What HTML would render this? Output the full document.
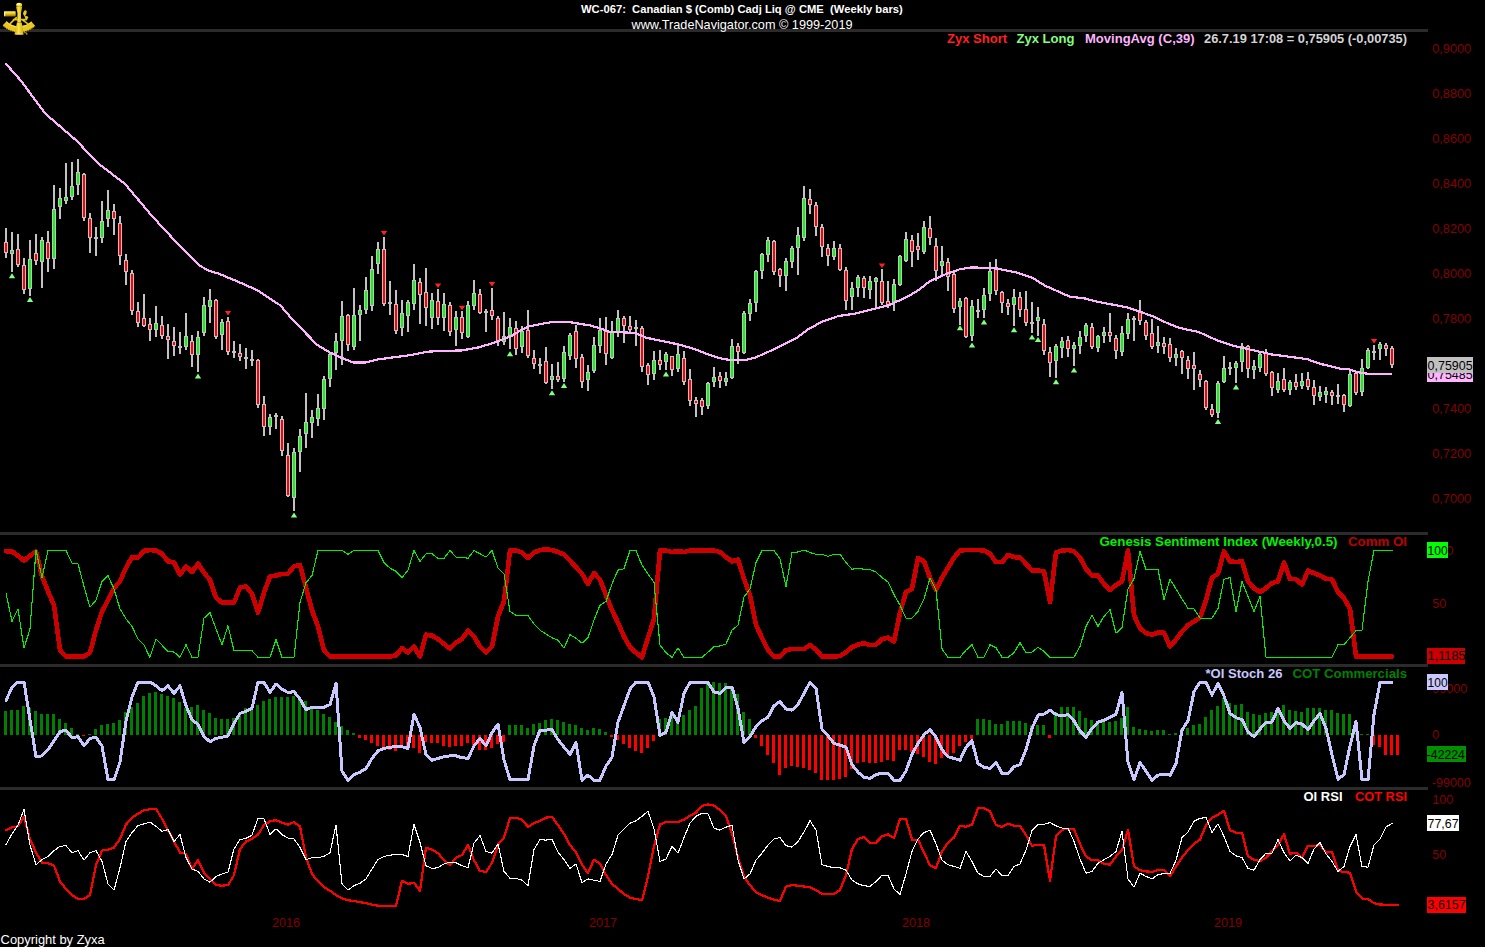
<!DOCTYPE html><html><head><meta charset="utf-8"><title>WC-067 Canadian $ Weekly</title><style>
html,body{margin:0;padding:0;background:#000}body{width:1485px;height:947px;overflow:hidden;position:relative}
svg{position:absolute;left:0;top:0;display:block}text{font-family:"Liberation Sans",Arial,sans-serif}
.b{font-weight:bold}.ax{fill:#800000;font-size:13px}
</style></head><body>
<svg width="1485" height="947" viewBox="0 0 1485 947">
<rect width="1485" height="947" fill="#000"/>
<g fill="#2b2b2b" shape-rendering="crispEdges">
<rect x="0" y="29" width="1428" height="3"/>
<rect x="0" y="532" width="1428" height="3"/>
<rect x="0" y="664" width="1428" height="3"/>
<rect x="0" y="787" width="1428" height="3"/>
</g>
<g shape-rendering="crispEdges">
<rect x="4" y="711" width="3" height="24" fill="#008000"/>
<rect x="10" y="710" width="3" height="25" fill="#008000"/>
<rect x="16" y="710" width="3" height="25" fill="#008000"/>
<rect x="22" y="706" width="3" height="29" fill="#008000"/>
<rect x="28" y="708" width="3" height="27" fill="#008000"/>
<rect x="34" y="711" width="3" height="24" fill="#008000"/>
<rect x="40" y="714" width="3" height="21" fill="#008000"/>
<rect x="46" y="714" width="3" height="21" fill="#008000"/>
<rect x="52" y="714" width="3" height="21" fill="#008000"/>
<rect x="58" y="719" width="3" height="16" fill="#008000"/>
<rect x="64" y="723" width="3" height="12" fill="#008000"/>
<rect x="70" y="728" width="3" height="7" fill="#008000"/>
<rect x="76" y="734" width="3" height="1" fill="#008000"/>
<rect x="82" y="735" width="3" height="1" fill="#f00"/>
<rect x="88" y="734" width="3" height="1" fill="#008000"/>
<rect x="94" y="729" width="3" height="6" fill="#008000"/>
<rect x="100" y="725" width="3" height="10" fill="#008000"/>
<rect x="106" y="724" width="3" height="11" fill="#008000"/>
<rect x="112" y="723" width="3" height="12" fill="#008000"/>
<rect x="118" y="720" width="3" height="15" fill="#008000"/>
<rect x="124" y="712" width="3" height="23" fill="#008000"/>
<rect x="130" y="707" width="3" height="28" fill="#008000"/>
<rect x="136" y="703" width="3" height="32" fill="#008000"/>
<rect x="142" y="696" width="3" height="39" fill="#008000"/>
<rect x="148" y="693" width="3" height="42" fill="#008000"/>
<rect x="154" y="692" width="3" height="43" fill="#008000"/>
<rect x="160" y="694" width="3" height="41" fill="#008000"/>
<rect x="166" y="696" width="3" height="39" fill="#008000"/>
<rect x="172" y="698" width="3" height="37" fill="#008000"/>
<rect x="178" y="702" width="3" height="33" fill="#008000"/>
<rect x="184" y="708" width="3" height="27" fill="#008000"/>
<rect x="190" y="707" width="3" height="28" fill="#008000"/>
<rect x="196" y="705" width="3" height="30" fill="#008000"/>
<rect x="202" y="710" width="3" height="25" fill="#008000"/>
<rect x="208" y="713" width="3" height="22" fill="#008000"/>
<rect x="214" y="718" width="3" height="17" fill="#008000"/>
<rect x="220" y="719" width="3" height="16" fill="#008000"/>
<rect x="226" y="719" width="3" height="16" fill="#008000"/>
<rect x="232" y="718" width="3" height="17" fill="#008000"/>
<rect x="238" y="713" width="3" height="22" fill="#008000"/>
<rect x="244" y="708" width="3" height="27" fill="#008000"/>
<rect x="250" y="708" width="3" height="27" fill="#008000"/>
<rect x="256" y="705" width="3" height="30" fill="#008000"/>
<rect x="262" y="701" width="3" height="34" fill="#008000"/>
<rect x="268" y="699" width="3" height="36" fill="#008000"/>
<rect x="274" y="697" width="3" height="38" fill="#008000"/>
<rect x="280" y="697" width="3" height="38" fill="#008000"/>
<rect x="286" y="697" width="3" height="38" fill="#008000"/>
<rect x="292" y="696" width="3" height="39" fill="#008000"/>
<rect x="298" y="697" width="3" height="38" fill="#008000"/>
<rect x="304" y="701" width="3" height="34" fill="#008000"/>
<rect x="310" y="708" width="3" height="27" fill="#008000"/>
<rect x="316" y="710" width="3" height="25" fill="#008000"/>
<rect x="322" y="714" width="3" height="21" fill="#008000"/>
<rect x="328" y="717" width="3" height="18" fill="#008000"/>
<rect x="334" y="722" width="3" height="13" fill="#008000"/>
<rect x="340" y="726" width="3" height="9" fill="#008000"/>
<rect x="346" y="730" width="3" height="5" fill="#008000"/>
<rect x="352" y="733" width="3" height="2" fill="#008000"/>
<rect x="358" y="735" width="3" height="3" fill="#f00"/>
<rect x="364" y="735" width="3" height="5" fill="#f00"/>
<rect x="370" y="735" width="3" height="8" fill="#f00"/>
<rect x="376" y="735" width="3" height="11" fill="#f00"/>
<rect x="382" y="735" width="3" height="12" fill="#f00"/>
<rect x="388" y="735" width="3" height="15" fill="#f00"/>
<rect x="394" y="735" width="3" height="16" fill="#f00"/>
<rect x="400" y="735" width="3" height="12" fill="#f00"/>
<rect x="406" y="735" width="3" height="13" fill="#f00"/>
<rect x="412" y="735" width="3" height="13" fill="#f00"/>
<rect x="418" y="735" width="3" height="18" fill="#f00"/>
<rect x="424" y="735" width="3" height="7" fill="#f00"/>
<rect x="430" y="735" width="3" height="8" fill="#f00"/>
<rect x="436" y="735" width="3" height="8" fill="#f00"/>
<rect x="442" y="735" width="3" height="11" fill="#f00"/>
<rect x="448" y="735" width="3" height="12" fill="#f00"/>
<rect x="454" y="735" width="3" height="11" fill="#f00"/>
<rect x="460" y="735" width="3" height="11" fill="#f00"/>
<rect x="466" y="735" width="3" height="8" fill="#f00"/>
<rect x="472" y="735" width="3" height="12" fill="#f00"/>
<rect x="478" y="735" width="3" height="15" fill="#f00"/>
<rect x="484" y="735" width="3" height="15" fill="#f00"/>
<rect x="490" y="735" width="3" height="13" fill="#f00"/>
<rect x="496" y="735" width="3" height="9" fill="#f00"/>
<rect x="502" y="735" width="3" height="7" fill="#f00"/>
<rect x="508" y="725" width="3" height="10" fill="#008000"/>
<rect x="514" y="725" width="3" height="10" fill="#008000"/>
<rect x="520" y="725" width="3" height="10" fill="#008000"/>
<rect x="526" y="728" width="3" height="7" fill="#008000"/>
<rect x="532" y="724" width="3" height="11" fill="#008000"/>
<rect x="538" y="723" width="3" height="12" fill="#008000"/>
<rect x="544" y="720" width="3" height="15" fill="#008000"/>
<rect x="550" y="719" width="3" height="16" fill="#008000"/>
<rect x="556" y="720" width="3" height="15" fill="#008000"/>
<rect x="562" y="722" width="3" height="13" fill="#008000"/>
<rect x="568" y="724" width="3" height="11" fill="#008000"/>
<rect x="574" y="725" width="3" height="10" fill="#008000"/>
<rect x="580" y="728" width="3" height="7" fill="#008000"/>
<rect x="586" y="730" width="3" height="5" fill="#008000"/>
<rect x="592" y="728" width="3" height="7" fill="#008000"/>
<rect x="598" y="729" width="3" height="6" fill="#008000"/>
<rect x="604" y="732" width="3" height="3" fill="#008000"/>
<rect x="610" y="735" width="3" height="2" fill="#f00"/>
<rect x="616" y="735" width="3" height="5" fill="#f00"/>
<rect x="622" y="735" width="3" height="9" fill="#f00"/>
<rect x="628" y="735" width="3" height="13" fill="#f00"/>
<rect x="634" y="735" width="3" height="16" fill="#f00"/>
<rect x="640" y="735" width="3" height="18" fill="#f00"/>
<rect x="646" y="735" width="3" height="13" fill="#f00"/>
<rect x="652" y="735" width="3" height="6" fill="#f00"/>
<rect x="658" y="719" width="3" height="16" fill="#008000"/>
<rect x="664" y="718" width="3" height="17" fill="#008000"/>
<rect x="670" y="716" width="3" height="19" fill="#008000"/>
<rect x="676" y="718" width="3" height="17" fill="#008000"/>
<rect x="682" y="715" width="3" height="20" fill="#008000"/>
<rect x="688" y="710" width="3" height="25" fill="#008000"/>
<rect x="694" y="706" width="3" height="29" fill="#008000"/>
<rect x="700" y="688" width="3" height="47" fill="#008000"/>
<rect x="706" y="684" width="3" height="51" fill="#008000"/>
<rect x="712" y="682" width="3" height="53" fill="#008000"/>
<rect x="718" y="683" width="3" height="52" fill="#008000"/>
<rect x="724" y="683" width="3" height="52" fill="#008000"/>
<rect x="730" y="686" width="3" height="49" fill="#008000"/>
<rect x="736" y="694" width="3" height="41" fill="#008000"/>
<rect x="742" y="712" width="3" height="23" fill="#008000"/>
<rect x="748" y="719" width="3" height="16" fill="#008000"/>
<rect x="754" y="735" width="3" height="3" fill="#f00"/>
<rect x="760" y="735" width="3" height="11" fill="#f00"/>
<rect x="766" y="735" width="3" height="20" fill="#f00"/>
<rect x="772" y="735" width="3" height="28" fill="#f00"/>
<rect x="778" y="735" width="3" height="40" fill="#f00"/>
<rect x="784" y="735" width="3" height="33" fill="#f00"/>
<rect x="790" y="735" width="3" height="31" fill="#f00"/>
<rect x="796" y="735" width="3" height="32" fill="#f00"/>
<rect x="802" y="735" width="3" height="33" fill="#f00"/>
<rect x="808" y="735" width="3" height="35" fill="#f00"/>
<rect x="814" y="735" width="3" height="38" fill="#f00"/>
<rect x="820" y="735" width="3" height="45" fill="#f00"/>
<rect x="826" y="735" width="3" height="45" fill="#f00"/>
<rect x="832" y="735" width="3" height="45" fill="#f00"/>
<rect x="838" y="735" width="3" height="44" fill="#f00"/>
<rect x="844" y="735" width="3" height="42" fill="#f00"/>
<rect x="850" y="735" width="3" height="34" fill="#f00"/>
<rect x="856" y="735" width="3" height="28" fill="#f00"/>
<rect x="862" y="735" width="3" height="27" fill="#f00"/>
<rect x="868" y="735" width="3" height="28" fill="#f00"/>
<rect x="874" y="735" width="3" height="28" fill="#f00"/>
<rect x="880" y="735" width="3" height="27" fill="#f00"/>
<rect x="886" y="735" width="3" height="25" fill="#f00"/>
<rect x="892" y="735" width="3" height="26" fill="#f00"/>
<rect x="898" y="735" width="3" height="15" fill="#f00"/>
<rect x="904" y="735" width="3" height="15" fill="#f00"/>
<rect x="910" y="735" width="3" height="17" fill="#f00"/>
<rect x="916" y="735" width="3" height="19" fill="#f00"/>
<rect x="922" y="735" width="3" height="22" fill="#f00"/>
<rect x="928" y="735" width="3" height="27" fill="#f00"/>
<rect x="934" y="735" width="3" height="29" fill="#f00"/>
<rect x="940" y="735" width="3" height="23" fill="#f00"/>
<rect x="946" y="735" width="3" height="22" fill="#f00"/>
<rect x="952" y="735" width="3" height="18" fill="#f00"/>
<rect x="958" y="735" width="3" height="11" fill="#f00"/>
<rect x="964" y="735" width="3" height="7" fill="#f00"/>
<rect x="970" y="735" width="3" height="4" fill="#f00"/>
<rect x="976" y="719" width="3" height="16" fill="#008000"/>
<rect x="982" y="719" width="3" height="16" fill="#008000"/>
<rect x="988" y="720" width="3" height="15" fill="#008000"/>
<rect x="994" y="724" width="3" height="11" fill="#008000"/>
<rect x="1000" y="724" width="3" height="11" fill="#008000"/>
<rect x="1006" y="721" width="3" height="14" fill="#008000"/>
<rect x="1012" y="721" width="3" height="14" fill="#008000"/>
<rect x="1018" y="721" width="3" height="14" fill="#008000"/>
<rect x="1024" y="723" width="3" height="12" fill="#008000"/>
<rect x="1030" y="725" width="3" height="10" fill="#008000"/>
<rect x="1036" y="725" width="3" height="10" fill="#008000"/>
<rect x="1042" y="725" width="3" height="10" fill="#008000"/>
<rect x="1048" y="735" width="3" height="3" fill="#f00"/>
<rect x="1054" y="712" width="3" height="23" fill="#008000"/>
<rect x="1060" y="707" width="3" height="28" fill="#008000"/>
<rect x="1066" y="707" width="3" height="28" fill="#008000"/>
<rect x="1072" y="707" width="3" height="28" fill="#008000"/>
<rect x="1078" y="711" width="3" height="24" fill="#008000"/>
<rect x="1084" y="718" width="3" height="17" fill="#008000"/>
<rect x="1090" y="720" width="3" height="15" fill="#008000"/>
<rect x="1096" y="721" width="3" height="14" fill="#008000"/>
<rect x="1102" y="722" width="3" height="13" fill="#008000"/>
<rect x="1108" y="722" width="3" height="13" fill="#008000"/>
<rect x="1114" y="721" width="3" height="14" fill="#008000"/>
<rect x="1120" y="718" width="3" height="17" fill="#008000"/>
<rect x="1126" y="707" width="3" height="28" fill="#008000"/>
<rect x="1132" y="727" width="3" height="8" fill="#008000"/>
<rect x="1138" y="729" width="3" height="6" fill="#008000"/>
<rect x="1144" y="730" width="3" height="5" fill="#008000"/>
<rect x="1150" y="731" width="3" height="4" fill="#008000"/>
<rect x="1156" y="730" width="3" height="5" fill="#008000"/>
<rect x="1162" y="730" width="3" height="5" fill="#008000"/>
<rect x="1168" y="734" width="3" height="1" fill="#008000"/>
<rect x="1174" y="733" width="3" height="2" fill="#008000"/>
<rect x="1180" y="729" width="3" height="6" fill="#008000"/>
<rect x="1186" y="728" width="3" height="7" fill="#008000"/>
<rect x="1192" y="725" width="3" height="10" fill="#008000"/>
<rect x="1198" y="724" width="3" height="11" fill="#008000"/>
<rect x="1204" y="717" width="3" height="18" fill="#008000"/>
<rect x="1210" y="710" width="3" height="25" fill="#008000"/>
<rect x="1216" y="706" width="3" height="29" fill="#008000"/>
<rect x="1222" y="698" width="3" height="37" fill="#008000"/>
<rect x="1228" y="703" width="3" height="32" fill="#008000"/>
<rect x="1234" y="705" width="3" height="30" fill="#008000"/>
<rect x="1240" y="704" width="3" height="31" fill="#008000"/>
<rect x="1246" y="712" width="3" height="23" fill="#008000"/>
<rect x="1252" y="714" width="3" height="21" fill="#008000"/>
<rect x="1258" y="715" width="3" height="20" fill="#008000"/>
<rect x="1264" y="713" width="3" height="22" fill="#008000"/>
<rect x="1270" y="712" width="3" height="23" fill="#008000"/>
<rect x="1276" y="711" width="3" height="24" fill="#008000"/>
<rect x="1282" y="705" width="3" height="30" fill="#008000"/>
<rect x="1288" y="710" width="3" height="25" fill="#008000"/>
<rect x="1294" y="711" width="3" height="24" fill="#008000"/>
<rect x="1300" y="712" width="3" height="23" fill="#008000"/>
<rect x="1306" y="708" width="3" height="27" fill="#008000"/>
<rect x="1312" y="708" width="3" height="27" fill="#008000"/>
<rect x="1318" y="708" width="3" height="27" fill="#008000"/>
<rect x="1324" y="710" width="3" height="25" fill="#008000"/>
<rect x="1330" y="710" width="3" height="25" fill="#008000"/>
<rect x="1336" y="713" width="3" height="22" fill="#008000"/>
<rect x="1342" y="714" width="3" height="21" fill="#008000"/>
<rect x="1348" y="714" width="3" height="21" fill="#008000"/>
<rect x="1354" y="733" width="3" height="2" fill="#008000"/>
<rect x="1360" y="734" width="3" height="1" fill="#008000"/>
<rect x="1366" y="734" width="3" height="1" fill="#008000"/>
<rect x="1372" y="735" width="3" height="10" fill="#f00"/>
<rect x="1378" y="735" width="3" height="12" fill="#f00"/>
<rect x="1384" y="735" width="3" height="20" fill="#f00"/>
<rect x="1390" y="735" width="3" height="20" fill="#f00"/>
<rect x="1396" y="735" width="3" height="20" fill="#f00"/>
</g>
<polyline points="6,551.3 12,551.3 18,555.8 24,560.6 30,555.8 36,551.3 42,576.3 48,591.4 54,605.2 60,650.2 66,656.5 72,656.5 78,656.5 84,656.5 90,652.7 96,630.2 102,611.4 108,600.1 114,588.1 120,581.4 126,567.6 132,557.1 138,557.6 144,550.8 150,550 156,550.5 162,553.8 168,561.3 174,562.6 180,574.6 186,566.3 192,572.1 198,563.8 204,572.6 210,580.1 216,597.6 222,602.6 228,602.6 234,602.6 240,587.6 246,586.4 252,593.9 258,612.7 264,592.6 270,576.3 276,575.6 282,573.8 288,573.8 294,566.3 300,565.1 306,587.6 312,610.2 318,626.4 324,650.2 330,656.5 336,656.5 342,656.5 348,656.5 354,656.5 360,656.5 366,656.5 372,656.5 378,656.5 384,656.5 390,656.5 396,655.3 402,648.2 408,652.7 414,646.5 420,656.5 426,634.7 432,635.7 438,639 444,644 450,648.5 456,642.7 462,639 468,630.7 474,636.5 480,646.5 486,652.7 492,646.5 498,616.4 504,601.4 510,550.5 516,550.5 522,552.5 528,558.1 534,552.5 540,550 546,549.5 552,550 558,552 564,554.5 570,560.6 576,567.1 582,573.8 588,583.9 594,573.1 600,579.6 606,595.1 612,610.2 618,622.7 624,636.5 630,647.2 636,652.7 642,657.3 648,637.7 654,618.9 660,550.5 666,550.5 672,552 678,551.3 684,552 690,550.5 696,550.5 702,550.5 708,550.5 714,550.5 720,552 726,557.1 732,561.3 738,559.6 744,578.8 750,595.1 756,625.2 762,637.7 768,650.2 774,656.5 780,656.5 786,650.2 792,649 798,649 804,649 810,645.2 816,649.7 822,656.5 828,656.5 834,656.5 840,656 846,652.2 852,647.2 858,644.7 864,643.2 870,645.2 876,644.7 882,639 888,637.7 894,641.5 900,612.7 906,592.1 912,588.9 918,558.1 924,561.3 930,577.6 936,590.1 942,577.6 948,567.6 954,557.6 960,550.5 966,550 972,550 978,550 984,550.5 990,553.8 996,562.1 1002,562.1 1008,555.1 1014,557.1 1020,557.6 1026,563.8 1032,570.6 1038,570.6 1044,571.3 1050,602.1 1056,552.5 1062,550.5 1068,550 1074,551.3 1080,557.6 1086,568.8 1092,575.6 1098,575.6 1104,583.9 1110,590.1 1116,585.1 1122,581.4 1128,550.5 1134,615.2 1140,628.2 1146,633.2 1152,634.7 1158,632.7 1164,632.7 1170,646.5 1176,639.7 1182,631.5 1188,625.2 1194,621.4 1200,617.7 1206,600.1 1212,577.6 1218,573.8 1224,551.3 1230,561.3 1236,562.1 1242,561.3 1248,581.4 1254,588.1 1260,592.1 1266,588.1 1272,583.1 1278,581.4 1284,562.6 1290,578.8 1296,579.3 1302,584.6 1308,570.6 1314,573.1 1320,575.6 1326,578.8 1332,579.3 1338,592.1 1344,598.1 1350,608.9 1356,656.5 1362,656.5 1368,656.5 1374,656.5 1380,656.5 1386,656.5 1392,656.5" fill="none" stroke="#cc0000" stroke-width="4.6" stroke-linejoin="round" stroke-linecap="round" shape-rendering="crispEdges" />
<polyline points="6,593.1 12,621.4 18,608.9 24,648.2 30,628.9 36,550 42,577.6 48,550.5 54,550.5 60,550.5 66,550.5 72,563.1 78,563.8 84,586.4 90,607.2 96,600.1 102,581.4 108,575.6 114,588.9 120,608.9 126,618.9 132,626.4 138,639 144,645.2 150,657.3 156,639 162,645.2 168,651.5 174,652 180,657.3 186,644.7 192,657.3 198,657.3 204,618.2 210,612.7 216,628.9 222,644.7 228,625.7 234,650.7 240,650.7 246,650.7 252,650.7 258,657.3 264,657.3 270,657.3 276,639.7 282,657.3 288,657.3 294,657.3 300,602.6 306,582.6 312,575.6 318,550.5 324,550.5 330,550.5 336,550.5 342,550.5 348,554.3 354,550.5 360,550.5 366,550.5 372,550.5 378,550.5 384,562.6 390,568.1 396,571.3 402,577.6 408,570.1 414,550.5 420,561.3 426,553.8 432,553.8 438,558.3 444,558.3 450,550.5 456,557.1 462,557.1 468,558.3 474,550.5 480,553.8 486,557.1 492,550.5 498,568.1 504,573.8 510,611.4 516,615.2 522,615.2 528,615.7 534,623.9 540,630.2 546,634 552,637.7 558,640.2 564,648.2 570,634.7 576,638.2 582,643.2 588,637.7 594,620.2 600,605.2 606,601.4 612,583.9 618,570.1 624,568.8 630,550.5 636,550.5 642,565.1 648,573.8 654,582.6 660,645.2 666,652.7 672,657.3 678,648.2 684,657.3 690,657.3 696,657.3 702,657.3 708,652.2 714,646.5 720,646 726,644 732,630.2 738,625.2 744,597.1 750,588.9 756,562.6 762,550.5 768,550.5 774,550.5 780,558.8 786,586.4 792,552.5 798,552 804,550 810,552.5 816,554.3 822,554.3 828,556.3 834,554.3 840,554.3 846,562.6 852,569.3 858,568.3 864,569.3 870,569.6 876,572.1 882,577.6 888,581.9 894,594.6 900,605.2 906,618.2 912,618.2 918,611.4 924,598.9 930,578.1 936,590.1 942,649 948,657.3 954,657.3 960,657.3 966,650.2 972,644.7 978,657.3 984,657.3 990,644.7 996,647.7 1002,657.3 1008,657.3 1014,652.7 1020,642.7 1026,652.7 1032,652.2 1038,647.2 1044,651.5 1050,657.3 1056,657.3 1062,657.3 1068,657.3 1074,657.3 1080,646.5 1086,626.4 1092,615.2 1098,626.4 1104,616.4 1110,609.7 1116,633.2 1122,627.7 1128,588.9 1134,578.8 1140,551.3 1146,569.3 1152,569.3 1158,569.3 1164,599.6 1170,579.3 1176,588.9 1182,598.9 1188,608.4 1194,608.9 1200,618.2 1206,618.2 1212,618.2 1218,608.4 1224,579.3 1230,577.6 1236,611.4 1242,581.4 1248,596.4 1254,611.4 1260,596.4 1266,657.3 1272,657.3 1278,657.3 1284,657.3 1290,657.3 1296,657.3 1302,657.3 1308,657.3 1314,657.3 1320,657.3 1326,657.3 1332,657.3 1338,644.7 1344,644.7 1350,637.7 1356,630.7 1362,630.2 1368,581.4 1374,550.5 1380,550.5 1386,550.5 1392,550.5" fill="none" stroke="#00f000" stroke-width="1.1" stroke-linejoin="round" stroke-linecap="round" shape-rendering="crispEdges" />
<polyline points="6,700.8 12,687.1 18,682 24,682 30,719.6 36,756.7 42,755.9 48,749.7 54,740.9 60,731.6 66,730.1 72,737.9 78,736.6 84,745.9 90,738.4 96,737.2 102,745.9 108,779.7 114,779.7 120,762.2 126,720.9 132,697.1 138,682 144,682 150,682 156,685.8 162,690.8 168,685.8 174,693.3 180,685.8 186,705.8 192,719.6 198,724.6 204,736.6 210,741.7 216,738.4 222,737.2 228,735.9 234,723.4 240,713.4 246,711.3 252,708.3 258,682 264,682.8 270,692.1 276,684 282,689.1 288,692.6 294,691.6 300,699.1 306,709.6 312,707.1 318,707.1 324,707.1 330,704.6 336,683.3 342,771 348,780.2 354,774.7 360,772.2 366,768.5 372,758.4 378,750.9 384,748.4 390,747.2 396,746.7 402,746.7 408,748.4 414,714.1 420,727.6 426,754.7 432,760.2 438,758.4 444,756.7 450,755.9 456,755.9 462,757.7 468,758.4 474,745.9 480,738.4 486,745.9 492,732.6 498,724.1 504,759.7 510,779.7 516,779.2 522,779.7 528,779.7 534,745.9 540,730.1 546,730.1 552,729.6 558,739.7 564,747.2 570,754.2 576,742.7 582,780.2 588,775.2 594,780.2 600,780.2 606,766 612,757.2 618,722.1 624,705.8 630,689.1 636,682 642,682 648,682 654,697.1 660,735.4 666,732.1 672,712.6 678,722.1 684,693.3 690,682.5 696,682 702,682 708,682.5 714,692.1 720,693.3 726,687.6 732,687.1 738,708.3 744,742.7 750,736.6 756,726.6 762,720.9 768,717.1 774,705.8 780,701.6 786,709.1 792,710.1 798,704.6 804,693.3 810,682.5 816,688.3 822,729.1 828,735.9 834,743.4 840,745.2 846,747.2 852,764.7 858,772.2 864,777.2 870,778.5 876,774.7 882,773 888,773.5 894,780.2 900,780.2 906,771 912,754.2 918,743.4 924,734.6 930,729.6 936,737.2 942,749.7 948,756.7 954,758.4 960,760.2 966,747.2 972,740.9 978,763.5 984,767.2 990,768.5 996,762.2 1002,773.5 1008,773.5 1014,766.7 1020,764.7 1026,749.7 1032,728.4 1038,715.1 1044,714.1 1050,710.1 1056,714.6 1062,715.9 1068,714.6 1074,720.9 1080,730.9 1086,737.2 1092,728.4 1098,722.1 1104,720.1 1110,717.1 1116,714.1 1122,692.6 1128,762.2 1134,779.7 1140,762.7 1146,771 1152,780.2 1158,775.2 1164,774.2 1170,775.2 1176,763.5 1182,730.1 1188,720.9 1194,691.6 1200,682 1206,682.5 1212,695.1 1218,683.3 1224,695.8 1230,713.4 1236,717.6 1242,719.6 1248,732.1 1254,736.6 1260,729.1 1266,722.1 1272,722.1 1278,708.3 1284,720.9 1290,728.4 1296,722.6 1302,724.1 1308,729.6 1314,720.9 1320,713.4 1326,728.4 1332,754.7 1338,779.2 1344,774.7 1350,745.9 1356,721.6 1362,779.7 1368,779.7 1374,714.6 1380,682.5 1386,682.5 1392,682.5" fill="none" stroke="#c8c8ff" stroke-width="3" stroke-linejoin="round" stroke-linecap="round" shape-rendering="crispEdges" />
<polyline points="6,830.1 12,827.1 18,826.3 24,817.1 30,838.9 36,852.6 42,862.7 48,863.2 54,865.7 60,881.4 66,889 72,895.2 78,899 84,899 90,895.2 96,865.2 102,850.6 108,849.6 114,847.6 120,838.9 126,824.6 132,817.6 138,813.8 144,810.1 150,809.3 156,808.8 162,818.8 168,830.1 174,841.4 180,852.6 186,853.9 192,868.9 198,860.2 204,872.7 210,878.9 216,885.2 222,885.7 228,885.2 234,875.2 240,848.9 246,841.4 252,838.9 258,834.6 264,825.1 270,821.3 276,820.1 282,822.6 288,824.6 294,822.1 300,826.3 306,857.6 312,873.9 318,881.4 324,887.2 330,890.7 336,895.2 342,898.2 348,900.2 354,901 360,902.2 366,903.2 372,904.7 378,905.7 384,906 390,906 396,906 402,880.7 408,883.9 414,882.7 420,890.7 426,847.6 432,849.6 438,853.1 444,860.2 450,865.2 456,857.6 462,855.1 468,845.1 474,860.2 480,870.9 486,871.9 492,862.7 498,844.6 504,837.6 510,818.1 516,817.6 522,819.6 528,826.8 534,823.1 540,820.8 546,817.6 552,816.8 558,825.1 564,833.8 570,845.1 576,852.6 582,864.7 588,873.2 594,859.6 600,863.9 606,875.2 612,883.9 618,889 624,894 630,897.7 636,899 642,900.2 648,876.4 654,846.4 660,824.3 666,822.1 672,822.1 678,822.1 684,819.6 690,815.6 696,812.6 702,805.8 708,804.5 714,805.5 720,810.1 726,816.3 732,833.8 738,857.6 744,876.4 750,885.2 756,892.2 762,895.2 768,897.7 774,899.7 780,901 786,886.5 792,885.2 798,885.7 804,886.5 810,887.2 816,890.2 822,894 828,894 834,894 840,890.2 846,875.2 852,848.9 858,838.9 864,837.1 870,843.1 876,842.6 882,836.4 888,834.3 894,838.1 900,818.8 906,818.8 912,839.6 918,839.6 924,852.6 930,865.2 936,868.2 942,851.4 948,842.6 954,837.6 960,825.6 966,826.8 972,824.6 978,808.3 984,808 990,811.3 996,825.1 1002,826.8 1008,823.8 1014,825.8 1020,825.8 1026,835.1 1032,845.9 1038,844.6 1044,845.1 1050,880.7 1056,836.4 1062,829.6 1068,828.8 1074,829.3 1080,843.9 1086,856.4 1092,860.2 1098,860.2 1104,863.9 1110,864.7 1116,856.4 1122,850.1 1128,829.6 1134,866.4 1140,870.2 1146,871.4 1152,871.9 1158,870.2 1164,870.2 1170,876.4 1176,866.4 1182,857.6 1188,850.1 1194,843.9 1200,839.6 1206,825.1 1212,817.6 1218,814.6 1224,810.8 1230,830.1 1236,832.6 1242,832.6 1248,856.4 1254,859.6 1260,861.4 1266,857.6 1272,851.4 1278,845.1 1284,834.3 1290,853.9 1296,852.6 1302,857.6 1308,845.9 1314,845.9 1320,845.1 1326,852.6 1332,852.1 1338,870.2 1344,872.2 1350,872.7 1356,891.5 1362,898.5 1368,899 1374,903.2 1380,904.5 1386,904.7 1392,904.7 1398,904.7" fill="none" stroke="#ff0000" stroke-width="2.2" stroke-linejoin="round" stroke-linecap="round" shape-rendering="crispEdges" />
<polyline points="6,844.6 12,833.8 18,825.1 24,809.3 30,845.1 36,864.7 42,859.6 48,856.4 54,850.6 60,846.4 66,845.6 72,852.6 78,850.6 84,860.2 90,852.6 96,850.6 102,861.4 108,883.9 114,890.2 120,867.7 126,841.4 132,832.6 138,825.6 144,823.8 150,822.1 156,826.3 162,831.3 168,829.6 174,841.4 180,834.6 186,857.6 192,868.9 198,871.4 204,878.9 210,882.2 216,876.4 222,873.9 228,872.2 234,848.9 240,839.6 246,838.4 252,835.1 258,818.3 264,818.8 270,834.3 276,828.8 282,834.6 288,838.1 294,838.9 300,847.6 306,859.6 312,857.6 318,857.6 324,856.4 330,852.6 336,825.1 342,883.9 348,890.2 354,885.7 360,883.2 366,878.9 372,868.9 378,859.6 384,856.4 390,855.1 396,854.6 402,854.6 408,856.4 414,824.3 420,842.6 426,865.7 432,868.4 438,867.7 444,863.9 450,862.2 456,862.7 462,865.7 468,867.7 474,843.1 480,835.6 486,851.4 492,853.1 498,843.9 504,871.4 510,878.4 516,878.4 522,880.2 528,885.7 534,849.6 540,839.6 546,840.1 552,839.4 558,852.1 564,859.6 570,868.4 576,863.9 582,882.7 588,878.9 594,880.2 600,881.4 606,863.9 612,854.6 618,835.1 624,828.8 630,823.3 636,820.8 642,816.3 648,811.3 654,828.8 660,861.4 666,858.9 672,846.4 678,853.1 684,837.6 690,823.1 696,816.3 702,813.3 708,813.8 714,828.1 720,830.1 726,827.1 732,825.1 738,860.2 744,878.9 750,873.9 756,860.2 762,853.1 768,845.1 774,838.9 780,837.6 786,845.6 792,847.1 798,841.4 804,832.1 810,820.6 816,830.1 822,864.7 828,866.4 834,867.7 840,867.7 846,870.2 852,880.2 858,883.9 864,885.7 870,886.5 876,881.4 882,875.2 888,875.2 894,889 900,894.5 906,873.9 912,851.4 918,838.9 924,832.6 930,830.1 936,843.9 942,860.2 948,864.7 954,866.4 960,868.4 966,851.4 972,861.4 978,873.2 984,876.4 990,876.4 996,868.9 1002,875.7 1008,875.7 1014,866.4 1020,863.9 1026,850.1 1032,830.6 1038,824.6 1044,824.3 1050,822.6 1056,825.8 1062,828.1 1068,828.1 1074,841.4 1080,858.9 1086,873.2 1092,871.4 1098,863.4 1104,859.6 1110,856.4 1116,851.4 1122,831.3 1128,878.9 1134,887.2 1140,873.2 1146,876.4 1152,878.9 1158,874.7 1164,873.4 1170,873.4 1176,860.2 1182,837.6 1188,832.1 1194,821.3 1200,818.3 1206,817.6 1212,832.6 1218,823.8 1224,836.4 1230,851.4 1236,855.9 1242,857.6 1248,868.4 1254,870.2 1260,859.6 1266,853.1 1272,853.1 1278,839.6 1284,852.6 1290,860.9 1296,855.1 1302,857.6 1308,863.4 1314,848.9 1320,842.6 1326,853.9 1332,861.4 1338,871.4 1344,866.4 1350,846.4 1356,834.6 1362,866.4 1368,867.2 1374,845.1 1380,838.9 1386,827.1 1392,823.3" fill="none" stroke="#ffffff" stroke-width="1.1" stroke-linejoin="round" stroke-linecap="round" shape-rendering="crispEdges" />
<g shape-rendering="crispEdges">
<path d="M6 228v30M12 232v40M18 234v33M24 258v36M30 240v56M36 234v31M42 237v51M48 231v41M54 185v84M60 188v31M66 163v41M72 162v38M78 159v36M84 173v48M90 213v40M96 227v29M102 201v42M108 190v37M114 204v31M120 216v49M126 254v31M132 270v45M138 302v25M144 294v33M150 318v23M156 306v31M162 316v23M168 324v35M174 327v29M180 332v22M186 313v37M192 335v32M198 331v41M204 297v39M210 289v34M216 299v40M222 319v31M228 317v38M234 341v17M240 344v17M246 348v21M252 350v16M258 359v49M264 396v40M270 414v21M276 413v16M282 416v40M288 443v54M294 448v63M300 429v43M306 393v55M312 410v28M318 394v32M324 376v44M330 352v35M336 333v37M342 301v64M348 314v37M354 288v62M360 305v36M366 277v37M372 256v55M378 242v32M384 237v69M390 281v34M396 290v44M402 300v36M408 300v32M414 264v46M420 278v46M426 268v58M432 293v36M438 289v36M444 293v38M450 302v34M456 311v35M462 311v28M468 301v37M474 280v30M480 289v25M486 309v23M492 288v32M498 316v30M504 312v33M510 318v31M516 321v34M522 326v27M528 310v48M534 350v19M540 358v16M546 347v37M552 364v25M558 362v20M564 346v36M570 333v27M576 325v43M582 354v34M588 365v26M594 337v36M600 318v35M606 317v48M612 321v38M618 310v27M624 316v27M630 316v16M636 320v26M642 326v46M648 363v22M654 351v29M660 350v20M666 352v18M672 356v20M678 345v27M684 351v34M690 369v37M696 397v20M702 398v17M708 382v27M714 367v20M720 372v16M726 372v14M732 339v40M738 343v21M744 311v43M750 299v22M756 270v42M762 253v26M768 237v25M774 240v35M780 268v19M786 258v33M792 246v22M798 227v48M804 186v55M810 189v25M816 202v34M822 224v33M828 244v22M834 241v19M840 244v27M846 267v43M852 282v28M858 275v22M864 276v22M870 276v23M876 277v30M882 269v36M888 281v27M894 279v32M900 255v31M906 232v30M912 235v32M918 233v27M924 221v33M930 216v29M936 238v43M942 246v29M948 258v33M954 272v41M960 298v27M966 297v41M972 300v41M978 299v19M984 288v30M990 262v39M996 259v36M1002 291v22M1008 299v16M1014 289v37M1020 292v25M1026 291v35M1032 302v31M1038 307v29M1044 319v36M1050 347v30M1056 344v34M1062 337v21M1068 336v21M1074 342v24M1080 331v23M1086 323v19M1092 323v26M1098 335v17M1104 327v16M1110 313v29M1116 335v24M1122 326v30M1128 313v26M1134 316v25M1140 300v25M1146 320v20M1152 319v30M1158 326v27M1164 337v17M1170 338v24M1176 348v18M1182 350v24M1188 356v23M1194 352v38M1200 370v17M1206 380v30M1212 404v13M1218 381v37M1224 356v27M1230 362v13M1236 361v22M1242 343v29M1248 345v33M1254 360v19M1260 351v21M1266 349v27M1272 371v25M1278 373v20M1284 368v24M1290 380v15M1296 374v16M1302 373v16M1308 372v18M1314 380v25M1320 386v15M1326 387v16M1332 390v15M1338 384v20M1344 394v18M1350 369v38M1356 371v24M1362 359v37M1368 348v21M1374 345v15M1380 342v18M1386 343v13M1392 346v22" stroke="#c4c0c4" stroke-width="2" fill="none"/>
<path d="M4 242h4v11h-4zM10 250h4v4h-4zM16 249h4v16h-4zM22 265h4v25h-4zM28 259h4v30h-4zM34 253h4v8h-4zM40 240h4v22h-4zM46 242h4v17h-4zM52 209h4v50h-4zM58 198h4v9h-4zM64 197h4v4h-4zM70 186h4v11h-4zM76 172h4v13h-4zM82 174h4v44h-4zM88 218h4v20h-4zM94 237h4v2h-4zM100 221h4v17h-4zM106 210h4v9h-4zM112 211h4v8h-4zM118 223h4v33h-4zM124 260h4v12h-4zM130 273h4v38h-4zM136 311h4v12h-4zM142 318h4v8h-4zM148 324h4v6h-4zM154 323h4v7h-4zM160 325h4v11h-4zM166 336h4v4h-4zM172 341h4v5h-4zM178 346h4v2h-4zM184 336h4v11h-4zM190 341h4v14h-4zM196 337h4v18h-4zM202 305h4v28h-4zM208 300h4v7h-4zM214 300h4v37h-4zM220 322h4v13h-4zM226 321h4v31h-4zM232 351h4v2h-4zM238 353h4v4h-4zM244 357h4v2h-4zM250 359h4v2h-4zM256 360h4v45h-4zM262 404h4v23h-4zM268 417h4v10h-4zM274 415h4v2h-4zM280 419h4v32h-4zM286 455h4v41h-4zM292 452h4v46h-4zM298 436h4v16h-4zM304 422h4v12h-4zM310 417h4v6h-4zM316 408h4v11h-4zM322 379h4v30h-4zM328 354h4v25h-4zM334 341h4v12h-4zM340 316h4v25h-4zM346 315h4v30h-4zM352 315h4v32h-4zM358 310h4v5h-4zM364 290h4v20h-4zM370 269h4v37h-4zM376 249h4v15h-4zM382 249h4v55h-4zM388 302h4v2h-4zM394 304h4v27h-4zM400 313h4v15h-4zM406 302h4v14h-4zM412 280h4v24h-4zM418 282h4v13h-4zM424 292h4v16h-4zM430 300h4v18h-4zM436 301h4v17h-4zM442 304h4v14h-4zM448 305h4v27h-4zM454 317h4v13h-4zM460 317h4v16h-4zM466 305h4v32h-4zM472 293h4v13h-4zM478 294h4v19h-4zM484 311h4v2h-4zM490 310h4v6h-4zM496 318h4v23h-4zM502 336h4v6h-4zM508 327h4v9h-4zM514 328h4v21h-4zM520 331h4v16h-4zM526 330h4v26h-4zM532 358h4v6h-4zM538 364h4v2h-4zM544 361h4v22h-4zM550 376h4v4h-4zM556 376h4v4h-4zM562 352h4v27h-4zM568 335h4v21h-4zM574 331h4v28h-4zM580 357h4v25h-4zM586 372h4v8h-4zM592 345h4v26h-4zM598 330h4v16h-4zM604 331h4v23h-4zM610 332h4v26h-4zM616 318h4v14h-4zM622 318h4v8h-4zM628 326h4v4h-4zM634 327h4v2h-4zM640 328h4v39h-4zM646 365h4v10h-4zM652 360h4v14h-4zM658 360h4v5h-4zM664 354h4v8h-4zM670 356h4v14h-4zM676 354h4v15h-4zM682 358h4v24h-4zM688 379h4v22h-4zM694 400h4v4h-4zM700 400h4v7h-4zM706 383h4v23h-4zM712 377h4v5h-4zM718 376h4v5h-4zM724 378h4v4h-4zM730 346h4v32h-4zM736 346h4v6h-4zM742 313h4v40h-4zM748 303h4v11h-4zM754 271h4v32h-4zM760 254h4v17h-4zM766 240h4v15h-4zM772 241h4v31h-4zM778 269h4v7h-4zM784 261h4v15h-4zM790 248h4v14h-4zM796 235h4v13h-4zM802 198h4v40h-4zM808 199h4v6h-4zM814 205h4v22h-4zM820 227h4v20h-4zM826 248h4v8h-4zM832 248h4v9h-4zM838 248h4v22h-4zM844 270h4v31h-4zM850 288h4v9h-4zM856 277h4v11h-4zM862 278h4v10h-4zM868 281h4v9h-4zM874 278h4v4h-4zM880 281h4v22h-4zM886 301h4v4h-4zM892 284h4v19h-4zM898 256h4v29h-4zM904 239h4v22h-4zM910 240h4v12h-4zM916 246h4v4h-4zM922 227h4v25h-4zM928 228h4v10h-4zM934 246h4v25h-4zM940 261h4v5h-4zM946 262h4v15h-4zM952 274h4v35h-4zM958 301h4v6h-4zM964 298h4v39h-4zM970 306h4v30h-4zM976 310h4v2h-4zM982 295h4v15h-4zM988 271h4v23h-4zM994 269h4v22h-4zM1000 292h4v11h-4zM1006 303h4v4h-4zM1012 297h4v8h-4zM1018 297h4v13h-4zM1024 309h4v14h-4zM1030 322h4v2h-4zM1036 317h4v4h-4zM1042 324h4v27h-4zM1048 352h4v11h-4zM1054 346h4v15h-4zM1060 341h4v7h-4zM1066 340h4v9h-4zM1072 345h4v4h-4zM1078 337h4v9h-4zM1084 325h4v11h-4zM1090 327h4v20h-4zM1096 336h4v12h-4zM1102 332h4v4h-4zM1108 332h4v4h-4zM1114 338h4v13h-4zM1120 333h4v19h-4zM1126 319h4v15h-4zM1132 318h4v2h-4zM1138 312h4v9h-4zM1144 322h4v14h-4zM1150 333h4v14h-4zM1156 342h4v4h-4zM1162 343h4v4h-4zM1168 344h4v14h-4zM1174 354h4v4h-4zM1180 351h4v7h-4zM1186 360h4v9h-4zM1192 365h4v4h-4zM1198 374h4v6h-4zM1204 381h4v27h-4zM1210 409h4v6h-4zM1216 383h4v30h-4zM1222 368h4v14h-4zM1228 367h4v2h-4zM1234 363h4v5h-4zM1240 346h4v16h-4zM1246 346h4v23h-4zM1252 366h4v4h-4zM1258 354h4v14h-4zM1264 353h4v21h-4zM1270 372h4v16h-4zM1276 381h4v9h-4zM1282 379h4v11h-4zM1288 382h4v8h-4zM1294 382h4v5h-4zM1300 381h4v5h-4zM1306 379h4v8h-4zM1312 387h4v9h-4zM1318 392h4v5h-4zM1324 391h4v4h-4zM1330 392h4v4h-4zM1336 395h4v2h-4zM1342 395h4v10h-4zM1348 374h4v32h-4zM1354 373h4v20h-4zM1360 368h4v24h-4zM1366 350h4v18h-4zM1372 351h4v2h-4zM1378 344h4v5h-4zM1384 345h4v4h-4zM1390 348h4v17h-4z" fill="#c8c0c8"/>
<path d="M11 251h2v2h-2zM29 260h2v28h-2zM41 241h2v20h-2zM53 210h2v48h-2zM59 199h2v7h-2zM65 198h2v2h-2zM71 187h2v9h-2zM77 173h2v11h-2zM101 222h2v15h-2zM107 211h2v7h-2zM155 324h2v5h-2zM185 337h2v9h-2zM197 338h2v16h-2zM203 306h2v26h-2zM209 301h2v5h-2zM221 323h2v11h-2zM269 418h2v8h-2zM293 453h2v44h-2zM299 437h2v14h-2zM305 423h2v10h-2zM311 418h2v4h-2zM317 409h2v9h-2zM323 380h2v28h-2zM329 355h2v23h-2zM335 342h2v10h-2zM341 317h2v23h-2zM353 316h2v30h-2zM359 311h2v3h-2zM365 291h2v18h-2zM371 270h2v35h-2zM377 250h2v13h-2zM401 314h2v13h-2zM407 303h2v12h-2zM413 281h2v22h-2zM431 301h2v16h-2zM443 305h2v12h-2zM455 318h2v11h-2zM467 306h2v30h-2zM473 294h2v11h-2zM503 337h2v4h-2zM509 328h2v7h-2zM521 332h2v14h-2zM551 377h2v2h-2zM563 353h2v25h-2zM569 336h2v19h-2zM587 373h2v6h-2zM593 346h2v24h-2zM599 331h2v14h-2zM611 333h2v24h-2zM617 319h2v12h-2zM653 361h2v12h-2zM665 355h2v6h-2zM677 355h2v13h-2zM707 384h2v21h-2zM713 378h2v3h-2zM725 379h2v2h-2zM731 347h2v30h-2zM743 314h2v38h-2zM749 304h2v9h-2zM755 272h2v30h-2zM761 255h2v15h-2zM767 241h2v13h-2zM785 262h2v13h-2zM791 249h2v12h-2zM797 236h2v11h-2zM803 199h2v38h-2zM833 249h2v7h-2zM851 289h2v7h-2zM857 278h2v9h-2zM869 282h2v7h-2zM875 279h2v2h-2zM893 285h2v17h-2zM899 257h2v27h-2zM905 240h2v20h-2zM923 228h2v23h-2zM941 262h2v3h-2zM959 302h2v4h-2zM971 307h2v28h-2zM983 296h2v13h-2zM989 272h2v21h-2zM1013 298h2v6h-2zM1037 318h2v2h-2zM1055 347h2v13h-2zM1061 342h2v5h-2zM1073 346h2v2h-2zM1079 338h2v7h-2zM1085 326h2v9h-2zM1097 337h2v10h-2zM1103 333h2v2h-2zM1121 334h2v17h-2zM1127 320h2v13h-2zM1157 343h2v2h-2zM1175 355h2v2h-2zM1217 384h2v28h-2zM1223 369h2v12h-2zM1235 364h2v3h-2zM1241 347h2v14h-2zM1253 367h2v2h-2zM1259 355h2v12h-2zM1277 382h2v7h-2zM1289 383h2v6h-2zM1301 382h2v3h-2zM1319 393h2v3h-2zM1325 392h2v2h-2zM1349 375h2v30h-2zM1361 369h2v22h-2zM1367 351h2v16h-2zM1379 345h2v3h-2z" fill="#00ff00"/>
<path d="M5 243h2v9h-2zM17 250h2v14h-2zM23 266h2v23h-2zM35 254h2v6h-2zM47 243h2v15h-2zM83 175h2v42h-2zM89 219h2v18h-2zM113 212h2v6h-2zM119 224h2v31h-2zM125 261h2v10h-2zM131 274h2v36h-2zM137 312h2v10h-2zM143 319h2v6h-2zM149 325h2v4h-2zM161 326h2v9h-2zM167 337h2v2h-2zM173 342h2v3h-2zM191 342h2v12h-2zM215 301h2v35h-2zM227 322h2v29h-2zM239 354h2v2h-2zM257 361h2v43h-2zM263 405h2v21h-2zM281 420h2v30h-2zM287 456h2v39h-2zM347 316h2v28h-2zM383 250h2v53h-2zM395 305h2v25h-2zM419 283h2v11h-2zM425 293h2v14h-2zM437 302h2v15h-2zM449 306h2v25h-2zM461 318h2v14h-2zM479 295h2v17h-2zM491 311h2v4h-2zM497 319h2v21h-2zM515 329h2v19h-2zM527 331h2v24h-2zM533 359h2v4h-2zM545 362h2v20h-2zM557 377h2v2h-2zM575 332h2v26h-2zM581 358h2v23h-2zM605 332h2v21h-2zM623 319h2v6h-2zM629 327h2v2h-2zM641 329h2v37h-2zM647 366h2v8h-2zM659 361h2v3h-2zM671 357h2v12h-2zM683 359h2v22h-2zM689 380h2v20h-2zM695 401h2v2h-2zM701 401h2v5h-2zM719 377h2v3h-2zM737 347h2v4h-2zM773 242h2v29h-2zM779 270h2v5h-2zM809 200h2v4h-2zM815 206h2v20h-2zM821 228h2v18h-2zM827 249h2v6h-2zM839 249h2v20h-2zM845 271h2v29h-2zM863 279h2v8h-2zM881 282h2v20h-2zM887 302h2v2h-2zM911 241h2v10h-2zM917 247h2v2h-2zM929 229h2v8h-2zM935 247h2v23h-2zM947 263h2v13h-2zM953 275h2v33h-2zM965 299h2v37h-2zM995 270h2v20h-2zM1001 293h2v9h-2zM1007 304h2v2h-2zM1019 298h2v11h-2zM1025 310h2v12h-2zM1043 325h2v25h-2zM1049 353h2v9h-2zM1067 341h2v7h-2zM1091 328h2v18h-2zM1109 333h2v2h-2zM1115 339h2v11h-2zM1139 313h2v7h-2zM1145 323h2v12h-2zM1151 334h2v12h-2zM1163 344h2v2h-2zM1169 345h2v12h-2zM1181 352h2v5h-2zM1187 361h2v7h-2zM1193 366h2v2h-2zM1199 375h2v4h-2zM1205 382h2v25h-2zM1211 410h2v4h-2zM1247 347h2v21h-2zM1265 354h2v19h-2zM1271 373h2v14h-2zM1283 380h2v9h-2zM1295 383h2v3h-2zM1307 380h2v6h-2zM1313 388h2v7h-2zM1331 393h2v2h-2zM1343 396h2v8h-2zM1355 374h2v18h-2zM1385 346h2v2h-2zM1391 349h2v15h-2z" fill="#ff0000"/>
</g>
<polyline points="5.4,63.2 20.3,80 45.6,113.9 76,140.2 98,163.2 125,184 152,216 175.7,241.6 199.3,265.2 207,270 219.6,274 238.2,281.8 256.8,290 280.5,305.5 292,319 307.5,335 317.6,345.2 329.5,352.3 339.6,357 353,362.4 365.8,362.4 376.9,359.6 393.8,357.3 410.7,355.1 427.6,351.7 444.5,350.8 461.4,350.5 478.2,347.5 495.1,342.4 512,335.6 520.5,330.6 528.9,326.4 545.8,323 554.3,321.8 567.8,321.8 579.6,323.8 590,325.4 600.1,328.3 608.6,331.7 635.6,333 645.7,337.6 657.6,340.1 677.8,344.3 694.7,349 708.2,354.5 721.8,358.7 730.2,360 745.4,360 755.5,357.5 775.8,348.5 796.1,338.4 807.8,329.6 821.4,322 838.2,316.1 855.1,313.6 872,309.4 888.9,305.1 905.8,297.5 917.6,290.8 929.5,281.5 946.4,273.9 959.9,269.2 972,267.4 995.6,268.2 1017.6,272.8 1032.8,277.9 1044.6,285.5 1058.1,291.4 1070,296.8 1083.4,298.1 1098.6,302 1127.4,307.4 1139.9,311.7 1152.7,316.2 1166.2,322.6 1179.7,328 1198.9,332.1 1217.4,340.5 1236,346.5 1251.2,349.8 1271.5,354.4 1307,359.1 1320.5,363.9 1340.7,368.8 1349.2,369.3 1355.9,371.8 1367.8,373.8 1391.8,373.8" fill="none" stroke="#ffb4ff" stroke-width="2.2" stroke-linejoin="round" shape-rendering="crispEdges"/>
<path d="M12 273.3l3.2 5h-6.4zM30 297l3.2 5h-6.4zM198 373.5l3.2 5h-6.4zM294 512.5l3.2 5h-6.4zM510 351.2l3.2 5h-6.4zM552 390.2l3.2 5h-6.4zM564 383.1l3.2 5h-6.4zM666 371.4l3.2 5h-6.4zM960 325.3l3.2 5h-6.4zM972 342.5l3.2 5h-6.4zM984 319.6l3.2 5h-6.4zM1014 327.2l3.2 5h-6.4zM1032 334.5l3.2 5h-6.4zM1038 337l3.2 5h-6.4zM1056 379.3l3.2 5h-6.4zM1074 367.5l3.2 5h-6.4zM1218 419.1l3.2 5h-6.4zM1236 384.5l3.2 5h-6.4z" fill="#80ff80"/>
<path d="M228 315.6l3.2 -4.5h-6.4zM384 235.6l3.2 -4.5h-6.4zM438 288l3.2 -4.5h-6.4zM462 310.3l3.2 -4.5h-6.4zM492 286.6l3.2 -4.5h-6.4zM882 267.9l3.2 -4.5h-6.4zM1374 343.5l3.2 -4.5h-6.4z" fill="#ff2020"/>
<text x="581" y="13" fill="#fff" font-size="11" class="b" textLength="321.8" lengthAdjust="spacingAndGlyphs" xml:space="preserve">WC-067:  Canadian $ (Comb) Cadj Liq @ CME  (Weekly bars)</text>
<text x="631.5" y="28.6" fill="#fff" font-size="13" textLength="221" lengthAdjust="spacingAndGlyphs" >www.TradeNavigator.com © 1999-2019</text>
<text x="947" y="43" fill="#ff2020" font-size="13" class="b" textLength="60.2" lengthAdjust="spacingAndGlyphs" >Zyx Short</text>
<text x="1016.5" y="43" fill="#80ff80" font-size="13" class="b" textLength="58" lengthAdjust="spacingAndGlyphs" >Zyx Long</text>
<text x="1085" y="43" fill="#ffb4ff" font-size="13" class="b" textLength="109.6" lengthAdjust="spacingAndGlyphs" >MovingAvg (C,39)</text>
<text x="1204" y="43" fill="#d4d4d4" font-size="13" class="b" textLength="203" lengthAdjust="spacingAndGlyphs" >26.7.19 17:08 = 0,75905 (-0,00735)</text>
<text x="1099.5" y="545.7" fill="#00f000" font-size="13" class="b" textLength="238" lengthAdjust="spacingAndGlyphs" >Genesis Sentiment Index (Weekly,0.5)</text>
<text x="1348" y="545.7" fill="#c00000" font-size="13" class="b" textLength="59" lengthAdjust="spacingAndGlyphs" >Comm OI</text>
<text x="1205.5" y="677.7" fill="#c8c8ff" font-size="13" class="b" textLength="77" lengthAdjust="spacingAndGlyphs" >*OI Stoch 26</text>
<text x="1292.5" y="677.7" fill="#008000" font-size="13" class="b" textLength="114.5" lengthAdjust="spacingAndGlyphs" >COT Commercials</text>
<text x="1303.5" y="800.7" fill="#ffffff" font-size="13" class="b" textLength="39" lengthAdjust="spacingAndGlyphs" >OI RSI</text>
<text x="1355" y="800.7" fill="#ff0000" font-size="13" class="b" textLength="52" lengthAdjust="spacingAndGlyphs" >COT RSI</text>
<text x="1432.2" y="53" fill="#840000" font-size="13.33" textLength="39" lengthAdjust="spacingAndGlyphs" >0,9000</text>
<text x="1432.2" y="98" fill="#840000" font-size="13.33" textLength="39" lengthAdjust="spacingAndGlyphs" >0,8800</text>
<text x="1432.2" y="143" fill="#840000" font-size="13.33" textLength="39" lengthAdjust="spacingAndGlyphs" >0,8600</text>
<text x="1432.2" y="188" fill="#840000" font-size="13.33" textLength="39" lengthAdjust="spacingAndGlyphs" >0,8400</text>
<text x="1432.2" y="233" fill="#840000" font-size="13.33" textLength="39" lengthAdjust="spacingAndGlyphs" >0,8200</text>
<text x="1432.2" y="278" fill="#840000" font-size="13.33" textLength="39" lengthAdjust="spacingAndGlyphs" >0,8000</text>
<text x="1432.2" y="323" fill="#840000" font-size="13.33" textLength="39" lengthAdjust="spacingAndGlyphs" >0,7800</text>
<text x="1432.2" y="368" fill="#840000" font-size="13.33" textLength="39" lengthAdjust="spacingAndGlyphs" >0,7600</text>
<text x="1432.2" y="413" fill="#840000" font-size="13.33" textLength="39" lengthAdjust="spacingAndGlyphs" >0,7400</text>
<text x="1432.2" y="458" fill="#840000" font-size="13.33" textLength="39" lengthAdjust="spacingAndGlyphs" >0,7200</text>
<text x="1432.2" y="503" fill="#840000" font-size="13.33" textLength="39" lengthAdjust="spacingAndGlyphs" >0,7000</text>
<text x="1432.2" y="554.6" fill="#840000" font-size="13.33" textLength="21" lengthAdjust="spacingAndGlyphs" >100</text>
<text x="1432.2" y="607.8" fill="#840000" font-size="13.33" textLength="14" lengthAdjust="spacingAndGlyphs" >50</text>
<text x="1432.2" y="693.1" fill="#840000" font-size="13.33" textLength="35" lengthAdjust="spacingAndGlyphs" >99000</text>
<text x="1432.2" y="738.5" fill="#840000" font-size="13.33" textLength="7" lengthAdjust="spacingAndGlyphs" >0</text>
<text x="1432.2" y="803.7" fill="#840000" font-size="13.33" textLength="21" lengthAdjust="spacingAndGlyphs" >100</text>
<text x="1432.2" y="858.8" fill="#840000" font-size="13.33" textLength="14" lengthAdjust="spacingAndGlyphs" >50</text>
<text x="1431.8" y="786.8" fill="#840000" font-size="13.33" textLength="39" lengthAdjust="spacingAndGlyphs" >-99000</text>
<text x="271.9" y="927.1" fill="#840000" font-size="13.33" textLength="28" lengthAdjust="spacingAndGlyphs" >2016</text>
<text x="588.9" y="927.1" fill="#840000" font-size="13.33" textLength="28" lengthAdjust="spacingAndGlyphs" >2017</text>
<text x="901.9" y="927.1" fill="#840000" font-size="13.33" textLength="28" lengthAdjust="spacingAndGlyphs" >2018</text>
<text x="1213.9" y="927.1" fill="#840000" font-size="13.33" textLength="28" lengthAdjust="spacingAndGlyphs" >2019</text>
<rect x="1427" y="369" width="46" height="13" fill="#ffb4ff" shape-rendering="crispEdges"/>
<text x="1427.6" y="379.3" fill="#000" font-size="13.33" textLength="45" lengthAdjust="spacingAndGlyphs" >0,75485</text>
<rect x="1427" y="357" width="46" height="16" fill="#c0c0c0" shape-rendering="crispEdges"/>
<text x="1427.6" y="369.6" fill="#000" font-size="13.33" textLength="45" lengthAdjust="spacingAndGlyphs" >0,75905</text>
<rect x="1427" y="542" width="21" height="16" fill="#00ff00" shape-rendering="crispEdges"/>
<text x="1427.6" y="554.6" fill="#000" font-size="13.33" textLength="20" lengthAdjust="spacingAndGlyphs" >100</text>
<rect x="1427" y="648" width="38" height="16" fill="#cc0000" shape-rendering="crispEdges"/>
<text x="1427.6" y="660.3" fill="#000" font-size="13.33" textLength="38" lengthAdjust="spacingAndGlyphs" >1,1185</text>
<rect x="1427" y="674" width="21" height="16" fill="#c8c8ff" shape-rendering="crispEdges"/>
<text x="1427.6" y="686.5" fill="#000" font-size="13.33" textLength="20" lengthAdjust="spacingAndGlyphs" >100</text>
<rect x="1427" y="746" width="39" height="16" fill="#009000" shape-rendering="crispEdges"/>
<text x="1426.8" y="758.6" fill="#000" font-size="13.33" textLength="38" lengthAdjust="spacingAndGlyphs" >-42224</text>
<rect x="1427" y="815" width="32" height="16" fill="#ffffff" shape-rendering="crispEdges"/>
<text x="1427.6" y="827.6" fill="#000" font-size="13.33" textLength="31" lengthAdjust="spacingAndGlyphs" >77,67</text>
<rect x="1427" y="897" width="39" height="16" fill="#ff0000" shape-rendering="crispEdges"/>
<text x="1427.6" y="909.4" fill="#000" font-size="13.33" textLength="38" lengthAdjust="spacingAndGlyphs" >3,6157</text>
<text x="0.6" y="943.9" fill="#fff" font-size="13.33" textLength="104" lengthAdjust="spacingAndGlyphs" >Copyright by Zyxa</text>
<defs><linearGradient id="gt" x1="0" y1="0" x2="0" y2="1"><stop offset="0" stop-color="#fff27a"/><stop offset="0.45" stop-color="#ecc81a"/><stop offset="1" stop-color="#8a6c00"/></linearGradient><linearGradient id="gp" x1="0" y1="0" x2="1" y2="0"><stop offset="0" stop-color="#caa60c"/><stop offset="0.45" stop-color="#fbe44a"/><stop offset="1" stop-color="#c9a408"/></linearGradient></defs>
<g id="logo">
<path d="M4.7 23.2A21.1 21.1 0 0 0 33.2 23.6" fill="none" stroke="#e9c81c" stroke-width="5.6"/>
<path d="M3.2 25.4A24.2 24.2 0 0 0 34.9 25.8" fill="none" stroke="#e9c81c" stroke-width="1.6" stroke-dasharray="1.1 0.9"/>
<path d="M6 21.6A18.6 18.6 0 0 0 31.6 22" fill="none" stroke="#fff08a" stroke-width="0.9" opacity="0.8"/>
<path d="M16.3 17.6L10.4 23.4M13.5 19.6H26.5M22 19.6L27.6 23.6" fill="none" stroke="#e4c218" stroke-width="1.7" stroke-linecap="round"/>
<rect x="4.1" y="11.3" width="11.6" height="5.2" rx="0.8" fill="url(#gt)"/>
<rect x="4.1" y="11.6" width="1.1" height="4.6" fill="#fff6a8"/>
<path d="M16 6.4L22.3 6.4L21 13L21 22.6L17.2 22.6L17.4 13Z" fill="url(#gp)"/>
<path d="M16.9 22.4L21.7 22.4L23.7 34.4L14.4 34.4Z" fill="url(#gp)"/>
<path d="M15.5 34.2h7.3" stroke="#fff3a0" stroke-width="0.7"/>
<ellipse cx="19.1" cy="4.7" rx="3" ry="2" fill="#f4d933"/><ellipse cx="18.6" cy="4" rx="1.6" ry="0.9" fill="#fffbd0"/>
<ellipse cx="24.9" cy="12.8" rx="1.7" ry="2.6" fill="#e8c81c" transform="rotate(20 24.9 12.8)"/>
<ellipse cx="26.6" cy="17.6" rx="1.5" ry="1.5" fill="#ecd02a"/>
<path d="M24.4 14.8L26.6 19.6" stroke="#e4c218" stroke-width="1.3"/>
<path d="M24.2 32.6l2.6 0.4l0 1.8" fill="none" stroke="#e4c218" stroke-width="0.9"/>
</g>
</svg></body></html>
